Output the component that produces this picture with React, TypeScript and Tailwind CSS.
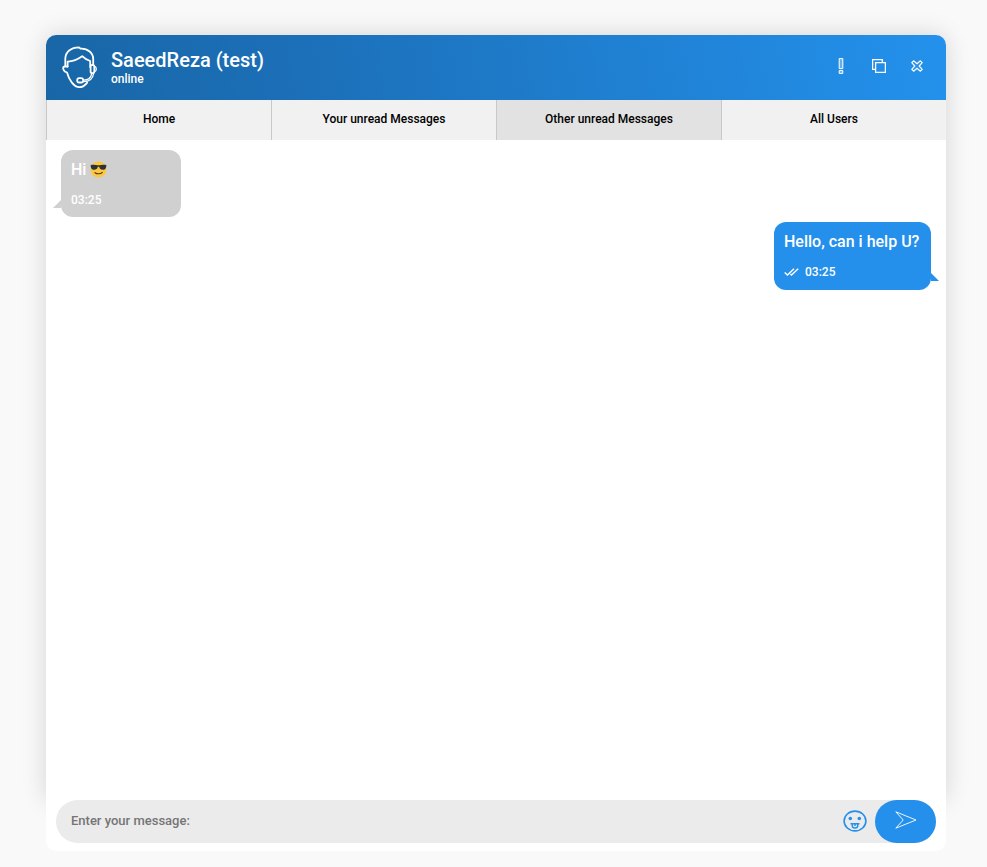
import React from "react";

const tabs = [
  { label: "Home", active: false },
  { label: "Your unread Messages", active: false },
  { label: "Other unread Messages", active: true },
  { label: "All Users", active: false },
];

function SupportIcon() {
  return (
    <svg width="36" height="46" viewBox="0 -1 36 46" fill="none" stroke="#fff" strokeWidth="1.8" strokeLinejoin="round" strokeLinecap="round" aria-hidden="true">
      <path d="M3.3 21V14C3.3 7 9 2.3 17 2.3l1.5 1.4C26 3.300 31.2 8 31.2 14V20" />
      <path d="M5.6 21.5V16.6C11 16.2 15.5 14.5 20.2 11.2C22.5 13.5 25 15.2 28.2 16V22" />
      <path d="M5.6 21.5H2.8C.6 21.5 .6 24.5 2.8 26.5L5 27.5C7 35 12 42.2 17.3 42.2C20.3 42.2 23 40.5 25.2 37.6" />
      <rect x="28.6" y="19.8" width="3.7" height="8.4" rx="1.7" />
      <path d="M32.3 21C35 22 35 26 32.3 27M29.8 28.2C29.2 32.5 26.5 35.2 21.5 35.2M31.6 28.2C31 33.5 27.5 36.6 21.5 36.6" strokeWidth="1.3" />
      <rect x="15.2" y="33.2" width="6" height="4.3" rx="2.1" />
    </svg>
  );
}

function SunglassesEmoji() {
  return (
    <svg className="shrink-0" width="17" height="18" viewBox="0 0 17 18" role="img" aria-label="Smiling face with sunglasses">
      <circle cx="8.5" cy="8.5" r="8" fill="#fcc840" />
      <path d="M.7 4C3.5 3.5 6 3.7 7.5 4.3h2C11 3.7 13.5 3.5 16.3 4V5.2C16 8 14.8 8.8 12.8 8.8C10.7 8.8 9.7 8 9.2 5.8H7.8C7.3 8 6.3 8.8 4.2 8.8C2.2 8.8 1 8 .7 5.2Z" fill="#2c3338" />
      <path d="M5 11.7C7 13.2 10.5 13.2 12.3 11.3" fill="none" stroke="#513719" strokeWidth="1.1" strokeLinecap="round" />
    </svg>
  );
}

function HeaderButton({ label, children }: { label: string; children: React.ReactNode }) {
  return (
    <button type="button" aria-label={label} className="flex h-6 w-[38px] items-center justify-center text-white">
      {children}
    </button>
  );
}

export default function App() {
  return (
    <div className="flex min-h-screen flex-col bg-[#f9f9f9] pt-[35px] pr-[41px] pb-4 pl-[46px] font-['Roboto',sans-serif] font-medium">
      <main className="flex grow flex-col rounded-t-[10px] bg-white shadow-[0_0_25px_rgba(0,0,0,0.15)]">
        <header className="flex h-[65px] items-center rounded-t-[10px] bg-[linear-gradient(80deg,#1866a6,#1c70b9_30%,#2391ec)] pr-[10px] pb-[2px] pl-4 text-white">
          <SupportIcon />
          <div className="ml-[13px] grow">
            <h1 className="text-xl leading-6">SaeedReza (test)</h1>
            <p className="text-xs leading-[14px]">online</p>
          </div>
          <div className="flex pb-[2px]">
            <HeaderButton label="Information">
              <svg width="6" height="16" viewBox="0 0 6 16" fill="#fff" fillOpacity=".3" stroke="#fff" strokeWidth="1">
                <path d="M1.2 .6h3.6v10H1.2zM1.2 12.6h3.6v2.8H1.2z" />
              </svg>
            </HeaderButton>
            <HeaderButton label="Open in window">
              <svg width="14" height="14" viewBox="0 0 14 14" fill="none" stroke="#fff" strokeWidth="1.3">
                <path d="M3.6 3.6h9.8v9.8H3.6zM3.6 10.4H.6V.6h9.8v3" />
              </svg>
            </HeaderButton>
            <HeaderButton label="Close">
              <svg width="12" height="12" viewBox="0 0 12 12" fill="none" stroke="#fff" strokeWidth="1.2" strokeLinejoin="round">
                <path d="M2.6 .8L6 3.8L9.4 .8L11.2 2.6L8.2 6L11.2 9.4L9.4 11.2L6 8.2L2.6 11.2L.8 9.4L3.8 6L.8 2.6Z" />
              </svg>
            </HeaderButton>
          </div>
        </header>

        <nav className="grid h-10 grid-cols-4">
          {tabs.map((tab) => (
            <button
              key={tab.label}
              type="button"
              className={`border-l border-[#c8c8c8] pb-[3px] text-xs text-black ${tab.active ? "bg-[#e2e2e2]" : "bg-[#f1f1f1]"}`}
            >
              {tab.label}
            </button>
          ))}
        </nav>

        <section aria-label="Conversation" className="flex grow flex-col gap-[5px] px-[15px] pt-[10px] text-white">
          <article className="relative h-[67px] w-[120px] self-start rounded-xl bg-[#d0d0d0] px-[10px] pt-[10px]">
            <p className="flex items-center gap-1 text-base leading-5">
              Hi
              <SunglassesEmoji />
            </p>
            <p className="mt-3 text-xs leading-4">03:25</p>
            <svg className="absolute bottom-[9px] -left-2" width="8" height="8" viewBox="0 0 8 8" aria-hidden="true">
              <path d="M0 8L8 0V8Z" fill="#d0d0d0" />
            </svg>
          </article>
          <article className="relative h-[68px] min-w-[157px] self-end rounded-xl bg-[#2490eb] px-[10px] pt-[10px]">
            <p className="text-base leading-5">Hello, can i help U?</p>
            <p className="mt-3 flex items-center gap-[6px] text-xs leading-4">
              <svg width="15" height="8" viewBox="0 0 15 8" fill="none" stroke="#fff" strokeWidth="1.4" aria-label="Read" role="img">
                <path d="M.7 4.5L3.5 7L10 .8M6.5 6L7.5 7L14.2 .8" />
              </svg>
              03:25
            </p>
            <svg className="absolute -right-2 bottom-[9px]" width="8" height="8" viewBox="0 0 8 8" aria-hidden="true">
              <path d="M8 8L0 0V8Z" fill="#2490eb" />
            </svg>
          </article>
        </section>
      </main>

      <form className="relative rounded-b-[10px] bg-white px-[10px] pb-2" onSubmit={(e) => e.preventDefault()}>
        <div className="flex h-[43px] items-center rounded-[22px] bg-[#ebebeb]">
          <input
            type="text"
            aria-label="Message"
            placeholder="Enter your message:"
            className="h-full min-w-0 grow bg-transparent pb-[2px] pl-[15px] text-[13px] text-black outline-none placeholder:text-[#757575]"
          />
          <button type="button" aria-label="Emoji" className="mr-2 pb-[2px]">
            <svg width="24" height="22" viewBox="0 0 24 22" fill="none" stroke="#2490eb" strokeWidth="1.6">
              <ellipse cx="12" cy="11" rx="10.9" ry="9.9" />
              <circle cx="7.3" cy="8.5" r="1.8" fill="#2490eb" stroke="none" />
              <circle cx="16.3" cy="8.5" r="1.8" fill="#2490eb" stroke="none" />
              <path d="M7.5 13.7h9M9.3 13.7v2c0 3 5.400 3 5.400 0v-2M12 13.7v2.300" strokeWidth="1.5" />
            </svg>
          </button>
          <button type="submit" aria-label="Send" className="flex h-[43px] w-[61px] items-center justify-center rounded-[22px] bg-[#2490eb] pb-[3px]">
            <svg width="22" height="18" viewBox="0 0 22 18" fill="none" stroke="#fff" strokeWidth=".9" strokeLinejoin="round">
              <path d="M.8 .8L21 9L.8 17.2L8.200 9Z" />
            </svg>
          </button>
        </div>
      </form>
    </div>
  );
}
